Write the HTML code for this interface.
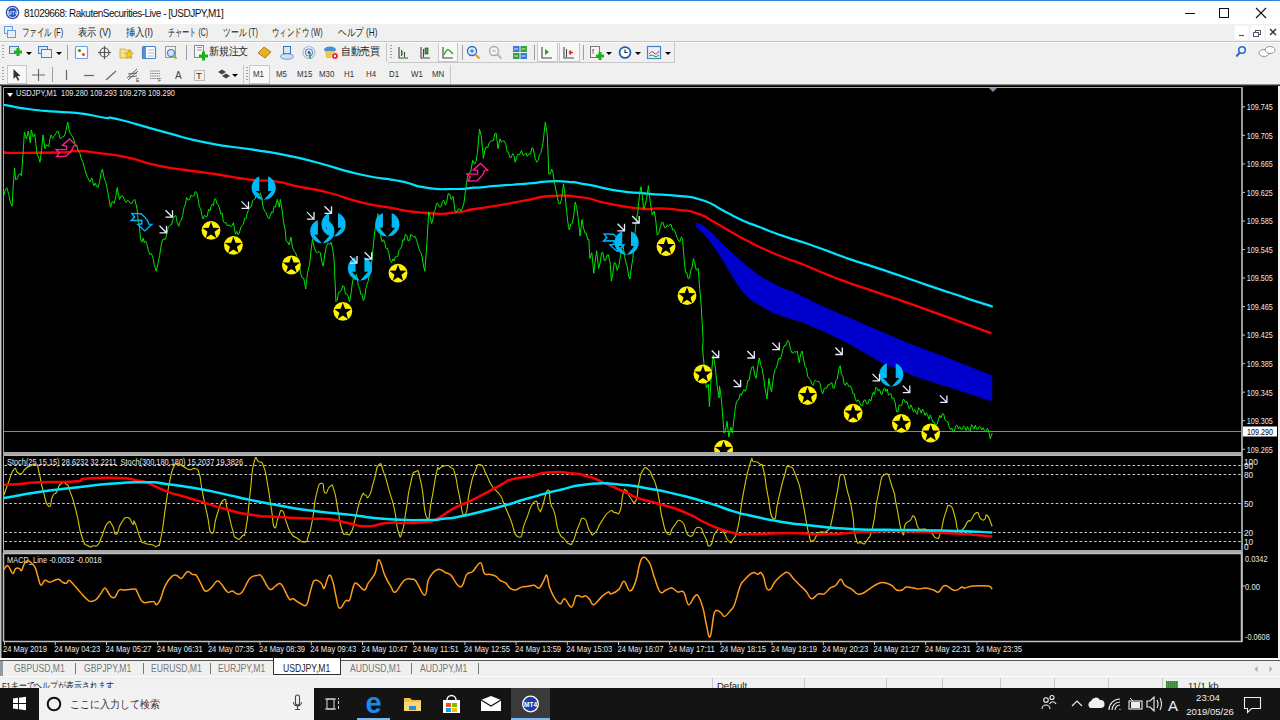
<!DOCTYPE html>
<html><head><meta charset="utf-8">
<style>
*{margin:0;padding:0;box-sizing:border-box}
html,body{width:1280px;height:720px;overflow:hidden;background:#f0f0f0;font-family:"Liberation Sans",sans-serif;color:#000}
.abs{position:absolute}
#title{left:0;top:0;width:1280px;height:24px;background:#fff;border-top:1px solid #2f86d8}
#title .t{left:24px;top:6.5px;font-size:10px;letter-spacing:-0.5px;color:#111;white-space:nowrap}
#menu{left:0;top:24px;width:1280px;height:17px;background:#f0f0f0}
#menu span{position:absolute;top:2px;font-size:10.5px;color:#222;white-space:nowrap;transform-origin:left}
#tb1{left:0;top:41px;width:1280px;height:22px;background:#f0f0f0}
#tb2{left:0;top:63px;width:1280px;height:21px;background:#f0f0f0}
#tb2 span{position:absolute;top:5px;font-size:9.5px;color:#333;white-space:nowrap;transform:scaleX(0.83);transform-origin:left}
#chart{left:0;top:84px;width:1280px;height:576px;background:#f0f0f0}
#tabs{left:0;top:658px;width:1280px;height:18px;background:#f0f0f0;border-top:2px solid #fff}
#tabs .dl{position:absolute;left:0;top:0;width:1280px;height:1px;background:#555}
#tabs span.tx{position:absolute;top:2.5px;font-size:10.3px;transform:scaleX(0.837);transform-origin:left;color:#777;white-space:nowrap}
#tabs i{position:absolute;top:3px;width:1px;height:11px;background:#777}
#status{left:0;top:676px;width:1280px;height:12px;background:#f0f0f0;overflow:hidden;border-top:1px solid #fafafa}
#status span{position:absolute;top:3px;font-size:9.5px;color:#222;white-space:nowrap;transform-origin:left}
#status i{position:absolute;top:1px;width:1px;height:12px;background:#c8c8c8}
#task{left:0;top:688px;width:1280px;height:32px;background:#141414}
.ax{font-size:8.3px;fill:#e8e8e8;font-family:"Liberation Sans",sans-serif}
.sep{position:absolute;width:1px;background:#a0a0a0}
.grip{position:absolute;width:2px;background:repeating-linear-gradient(#a0a0a0 0 1px,transparent 1px 3px)}
.dd{position:absolute;width:0;height:0;border-left:3px solid transparent;border-right:3px solid transparent;border-top:3px solid #000}
</style></head><body>
<div id="title" class="abs">
 <svg class="abs" style="left:5px;top:4px" width="15" height="15"><circle cx="7.5" cy="7.5" r="6.8" fill="#3050b0"/><circle cx="7.5" cy="7.5" r="5" fill="none" stroke="#e8ecff" stroke-width="1"/><text x="7.5" y="9.5" font-size="5" fill="#fff" text-anchor="middle" font-family="Liberation Sans">MT4</text></svg>
 <div class="t abs">81029668: RakutenSecurities-Live - [USDJPY,M1]</div>
 <svg class="abs" style="left:1180px;top:0" width="100" height="24">
  <line x1="5" y1="12.5" x2="15" y2="12.5" stroke="#111" stroke-width="1"/>
  <rect x="39.5" y="7.5" width="9" height="9" fill="none" stroke="#111" stroke-width="1"/>
  <line x1="76" y1="7" x2="86" y2="17" stroke="#111" stroke-width="1.1"/><line x1="86" y1="7" x2="76" y2="17" stroke="#111" stroke-width="1.1"/>
 </svg>
</div>
<div id="menu" class="abs">
 <svg class="abs" style="left:4px;top:2px" width="12" height="12"><rect x="0.5" y="0.5" width="8" height="7" fill="#e4eefc" stroke="#6a9ae0"/><rect x="3.5" y="4.5" width="8" height="7" fill="#e4eefc" stroke="#6a9ae0"/></svg>
 <span style="left:22px;transform:scaleX(0.68)">ファイル (F)</span>
 <span style="left:78px;transform:scaleX(0.85)">表示 (V)</span>
 <span style="left:126px;transform:scaleX(0.845)">挿入(I)</span>
 <span style="left:168px;transform:scaleX(0.65)">チャート (C)</span>
 <span style="left:223px;transform:scaleX(0.71)">ツール (T)</span>
 <span style="left:272px;transform:scaleX(0.675)">ウィンドウ (W)</span>
 <span style="left:338px;transform:scaleX(0.78)">ヘルプ (H)</span>
 <svg class="abs" style="left:1234px;top:0" width="46" height="17">
  <rect x="0.5" y="1.5" width="14" height="14" fill="#fff"/><rect x="16.5" y="1.5" width="14" height="14" fill="#fff"/><rect x="32" y="1.5" width="14" height="14" fill="#fff"/>
  <line x1="5" y1="11.5" x2="10" y2="11.5" stroke="#556" stroke-width="1.2"/>
  <rect x="21.5" y="6.5" width="5" height="4" fill="none" stroke="#556"/><rect x="19.5" y="8.5" width="5" height="4" fill="#fff" stroke="#556"/>
  <path d="M36,5 L42,11 M42,5 L36,11" stroke="#334" stroke-width="1.5"/>
 </svg>
</div>
<div id="tb1" class="abs">
 <div class="grip" style="left:2px;top:4px;height:15px"></div>
 <svg class="abs" style="left:0;top:0" width="700" height="22">
  <!-- new chart -->
  <rect x="9.5" y="5.5" width="9" height="7" fill="#dbe8f8" stroke="#4a80c8"/><path d="M14,11 h8 M18,7 v8" stroke="#1cb01c" stroke-width="3"/>
  <!-- profiles -->
  <rect x="38.5" y="5.5" width="9" height="7" fill="#dbe8f8" stroke="#4a80c8"/><rect x="41.5" y="8.5" width="10" height="8" fill="#e8f0fa" stroke="#4a80c8"/>
  <!-- market watch -->
  <rect x="75.5" y="5.5" width="12" height="12" rx="1" fill="#fff" stroke="#6aa0e0" stroke-width="1.2"/><circle cx="79.5" cy="9.5" r="1.6" fill="#20a020"/><circle cx="83.5" cy="13.5" r="1.6" fill="#e05030"/>
  <!-- navigator crosshair -->
  <circle cx="104.5" cy="11.5" r="4.5" fill="none" stroke="#555" stroke-width="1.2"/><path d="M104.5,5 v13 M98,11.5 h13" stroke="#555" stroke-width="1.2"/>
  <!-- folder star -->
  <path d="M120,8 h5 l1,1 h5 v8 h-11z" fill="#f5e08a" stroke="#c8a840" stroke-width="0.8"/><path d="M129,9 l1.3,3 3,.2 -2.3,2 .8,3 -2.8,-1.7 -2.8,1.7 .8,-3 -2.3,-2 3,-.2z" fill="#f5d020" stroke="#b09010" stroke-width="0.6"/>
  <!-- terminal -->
  <rect x="142.5" y="5.5" width="13" height="12" rx="1" fill="#fff" stroke="#4a80c8" stroke-width="1.2"/><rect x="143" y="6" width="3" height="11" fill="#5a90d8"/><path d="M148,9 h6 M148,12 h6 M148,15 h6" stroke="#a0b8d8"/>
  <!-- tester -->
  <rect x="165.5" y="5.5" width="10" height="11" fill="#f4f4f4" stroke="#999"/><circle cx="171" cy="12" r="3.5" fill="#cde4f8" stroke="#4a80c8" stroke-width="1.2"/><path d="M173.5,14.5 l3,3" stroke="#d0a000" stroke-width="2"/>
  <!-- new order -->
  <rect x="194.5" y="4.5" width="9" height="12" fill="#f8f8f8" stroke="#888"/><path d="M197,6.5 h5 M197,9 h5" stroke="#999"/><path d="M199,15 h9 M203.5,10.5 v9" stroke="#1cb01c" stroke-width="3"/>
  <!-- history/diamond -->
  <path d="M258,12 l6,-6 l7,5 l-6,6z" fill="#e8b020" stroke="#a07010" stroke-width="0.8"/>
  <!-- cloud -->
  <rect x="283.5" y="5.5" width="7" height="7" fill="#d8e8fa" stroke="#3a70c0"/><ellipse cx="287" cy="15.5" rx="6.5" ry="2.8" fill="#cfe0f4" stroke="#4a80c8" stroke-width="0.8"/>
  <!-- signals -->
  <circle cx="309" cy="11.5" r="6" fill="none" stroke="#a8c0e0" stroke-width="1.2"/><circle cx="309" cy="11.5" r="3.5" fill="none" stroke="#5a90d0" stroke-width="1.2"/><circle cx="309" cy="11.5" r="1.4" fill="#2060c0"/><path d="M310,12 v6" stroke="#30a030" stroke-width="1.5"/>
  <!-- auto trading -->
  <ellipse cx="330" cy="8.5" rx="6" ry="3" fill="#4a90d0"/><path d="M325,10 h10 l-1,7 h-8z" fill="#f0c840"/><circle cx="335" cy="15" r="3.4" fill="#e02020" stroke="#fff" stroke-width="0.8"/><circle cx="335" cy="15" r="1.2" fill="#fff"/>
  <!-- chart types -->
  <path d="M399,6 v11 h9 M401.5,9 v6 M404.5,11 v5" stroke="#444" stroke-width="1.1" fill="none"/><path d="M402,10 v4" stroke="#20a020" stroke-width="1.5"/>
  <path d="M421,6 v11 h9 M423.5,8 v8" stroke="#444" stroke-width="1.1" fill="none"/><rect x="425" y="7" width="3" height="6" fill="#30b030" stroke="#333" stroke-width="0.6"/>
  <rect x="438.5" y="1.5" width="19" height="19" fill="#f8f8f8" stroke="#c8c8c8"/>
  <path d="M443,6 v11 h10" stroke="#444" stroke-width="1.1" fill="none"/><path d="M444,14 q3,-7 5,-5 t4,4" stroke="#20a020" stroke-width="1.2" fill="none"/>
  <!-- zoom -->
  <circle cx="472" cy="10" r="4.5" fill="#dceafa" stroke="#2a6ac8" stroke-width="1.3"/><path d="M470,10 h4 M472,8 v4" stroke="#2a6ac8"/><path d="M475.5,13.5 l4,4" stroke="#d0a020" stroke-width="2"/>
  <circle cx="494" cy="10" r="4.5" fill="#f4f4f4" stroke="#a8a8a8" stroke-width="1.3"/><path d="M492,10 h4" stroke="#a8a8a8"/><path d="M497.5,13.5 l4,4" stroke="#b8b8b8" stroke-width="2"/>
  <!-- tile -->
  <rect x="513" y="5" width="6.5" height="6" fill="#3a7ad8"/><rect x="520.5" y="5" width="6.5" height="6" fill="#30a040"/><rect x="513" y="12" width="6.5" height="6" fill="#30a040"/><rect x="520.5" y="12" width="6.5" height="6" fill="#3a7ad8"/>
  <path d="M514,8 h4 M521.5,8 h4 M514,15 h4 M521.5,15 h4" stroke="#fff" stroke-width="0.8"/>
  <!-- autoscroll, shift -->
  <rect x="537.5" y="1.5" width="20" height="19" fill="#f8f8f8" stroke="#c8c8c8"/>
  <path d="M542,6 v11 h10" stroke="#444" stroke-width="1.1" fill="none"/><path d="M545,8 l4,3 l-4,3z" fill="#20a020"/>
  <rect x="559.5" y="1.5" width="20" height="19" fill="#f8f8f8" stroke="#c8c8c8"/>
  <path d="M564,6 v11 h10 M566.5,8 v8" stroke="#444" stroke-width="1.1" fill="none"/><path d="M573,11.5 l-4,0 M569,11.5 l2,-2 M569,11.5 l2,2" stroke="#d03020" stroke-width="1.3"/>
  <!-- indicators -->
  <rect x="590.5" y="5.5" width="9" height="11" fill="#f4f4f4" stroke="#777"/><text x="592" y="13" font-size="7" fill="#333" font-family="Liberation Sans">f</text><path d="M596,15 h8 M600,11 v8" stroke="#1cb01c" stroke-width="3"/>
  <!-- periods -->
  <circle cx="625" cy="11.5" r="6.3" fill="#1e5ab8"/><circle cx="625" cy="11.5" r="4.6" fill="#fff"/><path d="M625,8.5 v3 h2.5" stroke="#123" stroke-width="1.1" fill="none"/>
  <!-- templates -->
  <rect x="647.5" y="5.5" width="13" height="12" fill="#e8f0fa" stroke="#4a80c8" stroke-width="1.2"/><path d="M649,13 q3,-4 5,-1 t5,-2" stroke="#d03030" fill="none"/><path d="M649,15 q3,-2 5,0 t5,-1" stroke="#20a020" fill="none"/>
 </svg>
 <div class="dd" style="left:26px;top:11px"></div>
 <div class="dd" style="left:56px;top:11px"></div>
 <div class="sep" style="left:67px;top:4px;height:15px"></div>
 <div class="sep" style="left:186px;top:4px;height:15px"></div>
 <span class="abs" style="left:209px;top:4px;font-size:10.5px;color:#222;letter-spacing:-0.4px;transform:scaleX(0.92);transform-origin:left">新規注文</span>
 <span class="abs" style="left:341px;top:4px;font-size:10.5px;color:#222;letter-spacing:-0.4px;transform:scaleX(0.9);transform-origin:left">自動売買</span>
 <div class="sep" style="left:386px;top:2px;height:19px;background:#c8c8c8"></div>
 <div class="grip" style="left:390px;top:4px;height:15px"></div>
 <div class="sep" style="left:462px;top:4px;height:15px"></div>
 <div class="sep" style="left:534px;top:4px;height:15px"></div>
 <div class="sep" style="left:583px;top:4px;height:15px"></div>
 <div class="dd" style="left:606px;top:11px"></div>
 <div class="dd" style="left:635px;top:11px"></div>
 <div class="dd" style="left:665px;top:11px"></div>
 <svg class="abs" style="left:1232px;top:2px" width="48" height="19">
  <circle cx="10" cy="7" r="3.3" fill="none" stroke="#2a6ad0" stroke-width="1.6"/><path d="M7.8,9.5 l-3.5,4" stroke="#2a6ad0" stroke-width="2"/>
  <ellipse cx="32" cy="10" rx="5" ry="3.5" fill="#fff" stroke="#888" stroke-width="0.9"/><ellipse cx="38" cy="7" rx="5" ry="3.5" fill="#fff" stroke="#888" stroke-width="0.9"/>
 </svg>
</div>
<div class="abs" style="left:0;top:40.5px;width:1280px;height:1.2px;background:#c4c4c4"></div><div class="abs" style="left:0;top:42px;width:1280px;height:1px;background:#fafafa"></div>
<div class="abs" style="left:388px;top:61.5px;width:287px;height:1px;background:#c8c8c8"></div><div class="abs" style="left:674px;top:42px;width:1px;height:20px;background:#c8c8c8"></div>
<div id="tb2" class="abs">
 <div class="grip" style="left:2px;top:4px;height:15px"></div>
 <svg class="abs" style="left:0;top:0" width="460" height="21">
  <rect x="7.5" y="2.5" width="19" height="18" fill="#f8f8f8" stroke="#c8c8c8"/>
  <path d="M13.5,6 v10 l2.3,-2.3 l2,4 l1.5,-0.8 l-2,-3.8 h3.3z" fill="#333"/>
  <path d="M38.5,6 v12 M32,12 h13" stroke="#666" stroke-width="1.1"/>
  <path d="M66.5,7 v10" stroke="#666" stroke-width="1.2"/>
  <path d="M84,12.5 h10" stroke="#666" stroke-width="1.2"/>
  <path d="M106,17 l10,-9" stroke="#666" stroke-width="1.2"/>
  <path d="M127,15 l10,-9 M128,17 l10,-9 M128,11 l9,-1 M129,14 l8,-1" stroke="#555" stroke-width="0.9"/><text x="136" y="19" font-size="5" fill="#333" font-family="Liberation Sans">E</text>
  <path d="M150,8 h10 M150,10.5 h10 M150,13 h10 M150,15.5 h8" stroke="#666" stroke-width="0.8" stroke-dasharray="1.5,0.7"/><text x="158" y="19" font-size="5" fill="#333" font-family="Liberation Sans">F</text>
  <text x="175" y="16" font-size="10" fill="#444" font-family="Liberation Sans">A</text>
  <rect x="194.5" y="7.5" width="10" height="10" fill="none" stroke="#888" stroke-dasharray="1,1"/><text x="196" y="16" font-size="9.5" fill="#333" font-family="Liberation Sans">T</text>
  <path d="M218,9 l4,-2.5 l4,2.5 l-4,2.5z M222,13 l4,-2.5 l4,2.5 l-4,2.5z" fill="#444"/>
  <rect x="249.5" y="2.5" width="20" height="18" fill="#f8f8f8" stroke="#c8c8c8"/>
 </svg>
 <div class="dd" style="left:232px;top:11px"></div>
 <div class="sep" style="left:52px;top:4px;height:15px"></div>
 <div class="sep" style="left:243px;top:2px;height:19px;background:#c8c8c8"></div>
 <div class="grip" style="left:246px;top:4px;height:15px"></div>
 <span style="left:253px">M1</span>
 <span style="left:276px">M5</span>
 <span style="left:297px">M15</span>
 <span style="left:319px">M30</span>
 <span style="left:344px">H1</span>
 <span style="left:366px">H4</span>
 <span style="left:389px">D1</span>
 <span style="left:411px">W1</span>
 <span style="left:432px">MN</span>
 <div class="sep" style="left:450px;top:2px;height:19px;background:#c8c8c8"></div>
</div>
<div id="chart" class="abs">
 <svg class="abs" style="left:0;top:0" width="1280" height="576" viewBox="0 84 1280 576">
<rect x="0" y="84" width="1278" height="574" fill="#000"/><rect x="0" y="658" width="1280" height="2" fill="#fff"/><rect x="0" y="85" width="1.5" height="573" fill="#c8c8c8"/><rect x="0" y="84" width="1280" height="1" fill="#8c8c8c"/><rect x="0" y="85" width="1280" height="1" fill="#2a2a2a"/>
<path d="M3.5,455 V87.5 H1242 V455" fill="none" stroke="#a8a8a8" stroke-width="1"/><line x1="1242" y1="87" x2="1242" y2="642" stroke="#999" stroke-width="2"/>
<rect x="3" y="452" width="1239" height="3" fill="#a8a8a8"/>
<path d="M3.5,550 V455.5 H1241.5" fill="none" stroke="#b8b8b8" stroke-width="1"/>
<rect x="3" y="550" width="1239" height="3" fill="#a8a8a8"/>
<path d="M3.5,641.5 V553.5 H1241.5 V641.5 H3.5" fill="none" stroke="#c0c0c0" stroke-width="1.5"/>
<path d="M989,88 L997,88 L993,92 Z" fill="#8090a8"/>
<line x1="4" y1="431.5" x2="1241" y2="431.5" stroke="#778899" stroke-width="1"/>
<line x1="1242" y1="106.8" x2="1245" y2="106.8" stroke="#c0c0c0"/>
<text x="1246.7" y="110.1" class="ax" textLength="26" lengthAdjust="spacingAndGlyphs">109.745</text>
<line x1="1242" y1="135.3" x2="1245" y2="135.3" stroke="#c0c0c0"/>
<text x="1246.7" y="138.6" class="ax" textLength="26" lengthAdjust="spacingAndGlyphs">109.705</text>
<line x1="1242" y1="163.9" x2="1245" y2="163.9" stroke="#c0c0c0"/>
<text x="1246.7" y="167.2" class="ax" textLength="26" lengthAdjust="spacingAndGlyphs">109.665</text>
<line x1="1242" y1="192.4" x2="1245" y2="192.4" stroke="#c0c0c0"/>
<text x="1246.7" y="195.7" class="ax" textLength="26" lengthAdjust="spacingAndGlyphs">109.625</text>
<line x1="1242" y1="221.0" x2="1245" y2="221.0" stroke="#c0c0c0"/>
<text x="1246.7" y="224.3" class="ax" textLength="26" lengthAdjust="spacingAndGlyphs">109.585</text>
<line x1="1242" y1="249.5" x2="1245" y2="249.5" stroke="#c0c0c0"/>
<text x="1246.7" y="252.8" class="ax" textLength="26" lengthAdjust="spacingAndGlyphs">109.545</text>
<line x1="1242" y1="278.0" x2="1245" y2="278.0" stroke="#c0c0c0"/>
<text x="1246.7" y="281.3" class="ax" textLength="26" lengthAdjust="spacingAndGlyphs">109.505</text>
<line x1="1242" y1="306.6" x2="1245" y2="306.6" stroke="#c0c0c0"/>
<text x="1246.7" y="309.9" class="ax" textLength="26" lengthAdjust="spacingAndGlyphs">109.465</text>
<line x1="1242" y1="335.1" x2="1245" y2="335.1" stroke="#c0c0c0"/>
<text x="1246.7" y="338.4" class="ax" textLength="26" lengthAdjust="spacingAndGlyphs">109.425</text>
<line x1="1242" y1="363.7" x2="1245" y2="363.7" stroke="#c0c0c0"/>
<text x="1246.7" y="367.0" class="ax" textLength="26" lengthAdjust="spacingAndGlyphs">109.385</text>
<line x1="1242" y1="392.2" x2="1245" y2="392.2" stroke="#c0c0c0"/>
<text x="1246.7" y="395.5" class="ax" textLength="26" lengthAdjust="spacingAndGlyphs">109.345</text>
<line x1="1242" y1="420.7" x2="1245" y2="420.7" stroke="#c0c0c0"/>
<text x="1246.7" y="424.0" class="ax" textLength="26" lengthAdjust="spacingAndGlyphs">109.305</text>
<line x1="1242" y1="449.3" x2="1245" y2="449.3" stroke="#c0c0c0"/>
<text x="1246.7" y="452.6" class="ax" textLength="26" lengthAdjust="spacingAndGlyphs">109.265</text>
<rect x="1243" y="426.5" width="34" height="10" fill="#fff"/>
<text x="1247" y="434.8" class="ax" style="fill:#000" textLength="26" lengthAdjust="spacingAndGlyphs">109.290</text>
<line x1="4" y1="465.5" x2="1241" y2="465.5" stroke="#c8c8c8" stroke-width="1" stroke-dasharray="2.6,2.2" stroke-dashoffset="-0.5"/>
<line x1="4" y1="474.5" x2="1241" y2="474.5" stroke="#c8c8c8" stroke-width="1" stroke-dasharray="2.6,2.2" stroke-dashoffset="-0.5"/>
<line x1="4" y1="503.5" x2="1241" y2="503.5" stroke="#c8c8c8" stroke-width="1" stroke-dasharray="2.6,2.2" stroke-dashoffset="-0.5"/>
<line x1="4" y1="532.5" x2="1241" y2="532.5" stroke="#c8c8c8" stroke-width="1" stroke-dasharray="2.6,2.2" stroke-dashoffset="-0.5"/>
<line x1="4" y1="541.5" x2="1241" y2="541.5" stroke="#c8c8c8" stroke-width="1" stroke-dasharray="2.6,2.2" stroke-dashoffset="-0.5"/>
<text x="1244" y="464.5" class="ax">100</text>
<text x="1244" y="468.5" class="ax">90</text>
<text x="1244" y="478" class="ax">80</text>
<text x="1244" y="506.5" class="ax">50</text>
<text x="1244" y="535.8" class="ax">20</text>
<text x="1244" y="545" class="ax">10</text>
<text x="1244" y="549.5" class="ax">0</text>
<text x="1245" y="562" class="ax" textLength="22.6" lengthAdjust="spacingAndGlyphs">0.0342</text>
<text x="1245" y="589.5" class="ax" textLength="14.9" lengthAdjust="spacingAndGlyphs">0.00</text>
<text x="1245" y="640" class="ax" textLength="24.7" lengthAdjust="spacingAndGlyphs">-0.0608</text>
<line x1="1242" y1="586" x2="1245" y2="586" stroke="#c0c0c0"/>
<line x1="4.5" y1="641" x2="4.5" y2="645" stroke="#c0c0c0"/>
<text x="3.0" y="652.3" class="ax" textLength="44" lengthAdjust="spacingAndGlyphs">24 May 2019</text>
<line x1="55.3" y1="641" x2="55.3" y2="645" stroke="#c0c0c0"/>
<text x="54.3" y="652.3" class="ax" textLength="46" lengthAdjust="spacingAndGlyphs">24 May 04:23</text>
<line x1="106.5" y1="641" x2="106.5" y2="645" stroke="#c0c0c0"/>
<text x="105.5" y="652.3" class="ax" textLength="46" lengthAdjust="spacingAndGlyphs">24 May 05:27</text>
<line x1="157.7" y1="641" x2="157.7" y2="645" stroke="#c0c0c0"/>
<text x="156.7" y="652.3" class="ax" textLength="46" lengthAdjust="spacingAndGlyphs">24 May 06:31</text>
<line x1="208.9" y1="641" x2="208.9" y2="645" stroke="#c0c0c0"/>
<text x="207.9" y="652.3" class="ax" textLength="46" lengthAdjust="spacingAndGlyphs">24 May 07:35</text>
<line x1="260.1" y1="641" x2="260.1" y2="645" stroke="#c0c0c0"/>
<text x="259.1" y="652.3" class="ax" textLength="46" lengthAdjust="spacingAndGlyphs">24 May 08:39</text>
<line x1="311.3" y1="641" x2="311.3" y2="645" stroke="#c0c0c0"/>
<text x="310.3" y="652.3" class="ax" textLength="46" lengthAdjust="spacingAndGlyphs">24 May 09:43</text>
<line x1="362.5" y1="641" x2="362.5" y2="645" stroke="#c0c0c0"/>
<text x="361.5" y="652.3" class="ax" textLength="46" lengthAdjust="spacingAndGlyphs">24 May 10:47</text>
<line x1="413.7" y1="641" x2="413.7" y2="645" stroke="#c0c0c0"/>
<text x="412.7" y="652.3" class="ax" textLength="46" lengthAdjust="spacingAndGlyphs">24 May 11:51</text>
<line x1="464.9" y1="641" x2="464.9" y2="645" stroke="#c0c0c0"/>
<text x="463.9" y="652.3" class="ax" textLength="46" lengthAdjust="spacingAndGlyphs">24 May 12:55</text>
<line x1="516.1" y1="641" x2="516.1" y2="645" stroke="#c0c0c0"/>
<text x="515.1" y="652.3" class="ax" textLength="46" lengthAdjust="spacingAndGlyphs">24 May 13:59</text>
<line x1="567.3" y1="641" x2="567.3" y2="645" stroke="#c0c0c0"/>
<text x="566.3" y="652.3" class="ax" textLength="46" lengthAdjust="spacingAndGlyphs">24 May 15:03</text>
<line x1="618.5" y1="641" x2="618.5" y2="645" stroke="#c0c0c0"/>
<text x="617.5" y="652.3" class="ax" textLength="46" lengthAdjust="spacingAndGlyphs">24 May 16:07</text>
<line x1="669.7" y1="641" x2="669.7" y2="645" stroke="#c0c0c0"/>
<text x="668.7" y="652.3" class="ax" textLength="46" lengthAdjust="spacingAndGlyphs">24 May 17:11</text>
<line x1="720.9" y1="641" x2="720.9" y2="645" stroke="#c0c0c0"/>
<text x="719.9" y="652.3" class="ax" textLength="46" lengthAdjust="spacingAndGlyphs">24 May 18:15</text>
<line x1="772.1" y1="641" x2="772.1" y2="645" stroke="#c0c0c0"/>
<text x="771.1" y="652.3" class="ax" textLength="46" lengthAdjust="spacingAndGlyphs">24 May 19:19</text>
<line x1="823.3" y1="641" x2="823.3" y2="645" stroke="#c0c0c0"/>
<text x="822.3" y="652.3" class="ax" textLength="46" lengthAdjust="spacingAndGlyphs">24 May 20:23</text>
<line x1="874.5" y1="641" x2="874.5" y2="645" stroke="#c0c0c0"/>
<text x="873.5" y="652.3" class="ax" textLength="46" lengthAdjust="spacingAndGlyphs">24 May 21:27</text>
<line x1="925.7" y1="641" x2="925.7" y2="645" stroke="#c0c0c0"/>
<text x="924.7" y="652.3" class="ax" textLength="46" lengthAdjust="spacingAndGlyphs">24 May 22:31</text>
<line x1="976.9" y1="641" x2="976.9" y2="645" stroke="#c0c0c0"/>
<text x="975.9" y="652.3" class="ax" textLength="46" lengthAdjust="spacingAndGlyphs">24 May 23:35</text>
<path d="M7,93 L13,93 L10,97 Z" fill="#fff"/>
<text x="16" y="96.4" class="ax" style="font-size:8.3px" textLength="159" lengthAdjust="spacingAndGlyphs">USDJPY,M1&#160;&#160;109.280 109.293 109.278 109.290</text>
<text x="7" y="465" class="ax" style="font-size:8.3px" textLength="236" lengthAdjust="spacingAndGlyphs">Stoch(25,15,15) 28.6232 32.2211&#160;&#160;Stoch(300,180,180) 15.2037 19.3826</text>
<text x="7" y="563" class="ax" style="font-size:8.3px" textLength="94.6" lengthAdjust="spacingAndGlyphs">MACD_Line -0.0032 -0.0018</text>
<defs><clipPath id="cm"><rect x="4" y="88" width="1237" height="364"/></clipPath></defs><g clip-path="url(#cm)">
<polygon points="696.3,222.5 702.5,225 710,231.25 717.5,238.75 727.5,248.75 737.5,257.5 747.5,266.25 760,276.1 771.1,282.3 782.2,288 793.3,291.7 804.4,297.2 820,305 828,308.4 867.2,325.6 906.25,342.2 945.3,356.9 992.2,375.4 992.2,401.5 952.5,388.5 917.8,377.5 883,363.5 848.3,343.6 820.5,330 799.7,321.5 785.8,317.6 771.9,312.4 758,304.5 751,300 745,294.5 737.5,285 730,272.5 722.5,260 712.5,245 703.75,233.75 696.3,227.5" fill="#0000cd"/>
<path d="M3.8,104.8 C20.0,107.6 10.6,106.7 28.1,109 C45.6,111.3 39.0,110.3 56.25,111.7 C73.5,113.1 64.1,111.4 79.7,113.3 C95.3,115.2 89.7,115.3 103.1,117.5 C116.5,119.7 99.8,115.0 120,119.8 C140.2,124.6 134.6,124.2 163.75,131.9 C192.9,139.6 178.3,137.0 207.5,142.8 C236.7,148.6 225.8,145.4 251.25,149.4 C276.8,153.4 262.1,150.4 284,154.8 C305.9,159.2 291.4,155.9 316.9,162.5 C342.4,169.1 332.9,168.3 360.6,174.5 C388.3,180.7 378.3,176.7 400,181.1 C421.7,185.5 407.5,185.1 425.8,187.7 C444.1,190.3 438.7,189.0 455,189 C471.3,189.0 459.6,188.8 474.6,187.7 C489.6,186.6 481.8,187.1 500,185.7 C518.2,184.3 513.0,184.8 529.3,183.4 C545.6,182.0 535.8,181.9 548.8,181.4 C561.8,180.9 555.4,180.7 568.4,181.8 C581.4,182.9 571.6,181.8 587.9,184.7 C604.2,187.6 597.7,187.6 617.2,190.6 C636.7,193.6 626.4,191.8 646.5,193.6 C666.6,195.4 659.0,193.8 677.5,195.9 C696.0,198.0 686.3,194.9 701.9,200 C717.5,205.1 710.6,204.4 724.4,211.3 C738.2,218.2 731.3,215.4 743.2,220.65 C755.1,225.9 747.0,222.2 760,227.2 C773.0,232.2 767.4,230.4 782.2,235.6 C797.0,240.8 789.6,237.8 804.4,242.8 C819.2,247.8 811.9,245.2 826.7,250.6 C841.5,256.0 831.1,252.8 848.9,258.9 C866.7,265.0 854.4,260.3 880,268.9 C905.6,277.5 897.5,275.0 925.8,284.6 C954.1,294.2 942.5,290.2 964.8,297.6 C987.1,305.0 974.1,300.6 992.8,306.7" fill="none" stroke="#00e5ff" stroke-width="2.2" stroke-linejoin="round"/>
<path d="M3.9,151.9 C9.1,152.6 -6.5,152.7 11.7,152.9 C29.9,153.1 36.5,153.1 58.6,152.5 C80.7,151.9 65.0,150.9 78,151 C91.0,151.1 81.4,150.8 97.7,152.9 C114.0,155.0 107.6,153.3 127,157.4 C146.4,161.5 136.5,161.0 156,165.2 C175.5,169.4 165.9,167.1 185.5,170 C205.1,172.9 193.3,170.8 214.8,174 C236.3,177.2 229.8,177.1 250,179.6 C270.2,182.1 259.1,179.0 275.4,181.4 C291.7,183.8 281.3,183.0 298.8,186.7 C316.3,190.4 308.5,187.6 328,192.5 C347.5,197.4 337.8,196.4 357.4,201.3 C377.0,206.2 363.9,203.3 386.7,207.2 C409.5,211.1 403.0,211.2 425.8,213 C448.6,214.8 438.7,213.8 455,212.5 C471.3,211.2 459.6,211.4 474.6,209 C489.6,206.6 483.1,208.1 500,205.2 C516.9,202.3 507.8,203.5 525.4,200.4 C543.0,197.3 533.8,197.0 552.7,196 C571.6,195.0 563.8,195.0 582,197.4 C600.2,199.8 588.1,199.6 607.4,203.3 C626.7,207.0 622.9,206.8 640,208.5 C657.1,210.2 646.2,208.1 658.75,208.5 C671.2,208.9 665.0,208.2 677.5,209.8 C690.0,211.4 683.8,209.0 696.25,213.2 C708.8,217.4 702.5,215.7 715,222.5 C727.5,229.3 721.2,226.6 733.75,233.6 C746.2,240.6 743.8,238.9 752.5,243.4 C761.2,247.9 750.1,242.8 760,247.2 C769.9,251.6 767.4,250.8 782.2,256.7 C797.0,262.6 789.6,259.1 804.4,265 C819.2,270.9 811.9,268.5 826.7,274.4 C841.5,280.3 831.1,276.5 848.9,282.8 C866.7,289.1 854.4,284.5 880,293.3 C905.6,302.1 897.5,299.2 925.8,309.3 C954.1,319.4 942.9,315.6 964.8,323.6 C986.7,331.6 973.7,326.9 991.5,333.4" fill="none" stroke="#ff0000" stroke-width="2.3" stroke-linejoin="round"/>
<polyline points="3.9,195.5 5.3,189.8 6.8,187.7 8.8,194.5 10.4,202.4 12.1,206.2 13.3,184.3 14.6,168.1 15.6,179.8 17.1,179.2 18.6,175 20.1,173.5 21.5,175.9 22.9,156 24.4,132 26.4,138.8 28.3,131 30.3,142.7 31.2,130 33.2,136.9 34.8,133.9 37.1,154.5 38.5,157.2 40,162.3 41.5,150.5 43,134.9 44.9,148.6 46.9,144.7 48.8,146.6 50,138.6 51.2,134.9 52.5,138.4 53.7,136.9 55.7,133.9 57,131.4 58.2,131 60.2,138.8 62.5,136.9 64,136.4 65.4,133 67.8,122.2 69.3,131 71.3,134.9 72.8,136.9 74.2,140.8 75.7,146.3 77.1,146.6 78.1,150.5 79.6,152.1 81.1,158.4 83,162.3 85,170.1 86.5,174.9 87.9,177.9 89.8,181.8 91.8,177.9 93.8,185.7 95.2,183.2 96.7,186.7 98.2,187.2 99.6,181.8 101,173.2 102.5,169.1 104,177.6 105.5,181.8 107,187.5 108.4,195.5 110.4,207.2 112.3,201.3 114.3,203.3 115.8,196.3 117.2,187.7 119.5,199.4 121.2,195.9 123,196.4 125,201.3 126.3,202.2 127.6,200.1 128.9,201.3 130.4,203.6 131.8,203.3 133.3,200.5 134.8,199.4 136.7,207.2 136.7,205.9 138,218.8 139.3,226.3 140.6,239.1 141.8,242.2 143.1,238.1 144.3,242.7 145.5,241 146.9,244 148.4,250.8 149.9,254.5 151.4,253.7 152.9,257.3 154.3,264.5 156.2,271.3 158.2,262.5 159.6,255.6 161.1,245.9 162.6,239.5 164.1,239.1 165.6,239.1 167,233.2 168.4,226.7 169.9,225.4 171.4,224.8 172.9,219.5 174.4,216.1 175.8,215.6 177.2,222.3 178.7,226.4 180,221.4 181.3,220.2 182.6,215.6 184.1,207.3 185.5,203.9 186.5,197.4 188,200.1 189.5,199.4 190.9,195.2 192.4,196.4 193.9,195.7 195.3,191.6 196.8,192.6 198.2,199.4 199.4,206.9 200.6,208.3 201.9,215.3 203.1,218.9 204.6,215.1 206.1,217 207.3,216.4 208.5,209.1 209.7,211.3 210.9,207.2 212.1,204.3 213.4,205.5 214.6,198.8 215.8,199.4 217.1,204 218.4,204.9 219.7,209.1 220.9,214.1 222.1,213 223.4,221.8 224.6,222.8 226.1,222.7 227.6,226.1 229,224.7 230.5,226.7 231.9,225.7 233.4,222.8 235.4,234.2 236.7,231.3 238,234.7 239.3,233.2 240.8,227.3 242.2,225.4 243.4,224.3 244.6,218.3 245.9,219 247.1,213.7 248.6,209.4 250,207.2 251.3,206.8 252.6,200.9 253.9,199.4 255.2,198.8 256.5,193.5 257.8,192.5 259.1,195.5 260.4,192.8 261.7,197.4 263.1,206.8 264.6,211.1 266.1,212.6 267.6,217 269.1,218.7 270.5,215 271.7,211.8 272.9,212.8 274.2,206.5 275.4,207.2 277.3,199.4 279.3,207.2 280.3,199.4 282.2,211.1 283.7,222.8 285.2,230 286.1,241 287.6,241.9 289.1,244.9 291,237.1 292.4,246.9 293.9,250.8 295.4,252.4 296.9,256.6 298.2,263.8 299.5,265.8 300.8,274.2 302.2,277.7 303.7,278.1 305.7,288.9 307.6,272.3 309.6,264.5 311.1,250.3 312.5,239.1 314.5,248.8 315.9,251.7 317.4,252.7 318.9,251.7 320.3,252.7 321.8,261.6 323.2,266.4 324.7,255.3 326.2,246.9 328.1,243 329.6,244.6 331.1,242 332.6,248.7 334,258.6 335.5,291.8 335.9,301.6 337.2,300.1 338.5,292.2 339.8,291.8 341.3,290.7 342.8,285.9 344.1,286.5 345.4,293.9 346.7,293.8 348.1,296.5 349.6,301.6 351.1,292.9 352.5,282 353.8,276.6 355.1,279.4 356.4,274.2 358.4,285.9 359.6,288.2 360.9,294.5 362.1,294.5 363.3,300.6 364.6,297.9 365.9,288.3 367.2,284 368.4,280.5 369.6,268.6 370.9,267.1 372.1,258.6 373.6,242.2 375,229.3 376.4,222.5 377.9,213.7 379.4,224.5 380.9,237.1 382.2,242 383.5,239.7 384.8,243 386.1,248.6 387.4,248.1 388.7,252.7 390.1,260.2 391.6,262.5 392.8,258.9 394.1,261 395.3,256.9 396.5,256.6 397.8,256.4 399.1,250.4 400.4,248.8 401.6,246.5 402.9,239.5 404.1,240.5 405.3,234.2 406.8,235.4 408.2,241 409.5,240.5 410.8,234.3 412.1,235.2 413.6,236.9 415,236.1 416.5,239.7 418,244.9 419.4,250.2 420.9,252.7 422.2,257.1 423.5,266 424.8,271.3 426.8,244.9 428.7,211.7 430.1,216.4 431.6,223.4 432.8,220 434.1,211.3 435.3,209.4 436.5,203.3 438,203.7 439.5,207.2 440.9,207 442.4,201.3 443.9,200.3 445.3,205.2 446.8,201.6 448.2,193.5 449.7,194.1 451.2,199.4 453.1,196.4 455.1,211.1 456.6,212.2 458,209.1 459.4,209 460.9,211.1 462.4,208.1 463.9,203.3 465.8,187.7 467.8,175.9 469.2,173.1 470.7,172 472.7,160.3 474.6,164.2 476.1,161.2 477.5,152.5 479.5,129.1 481.4,136.9 483.4,158.4 484.9,150.2 486.3,146.6 487.8,147.6 489.3,142.7 490.8,140.9 492.2,140.8 493.5,140.4 494.8,133.7 496.1,133 498,148.6 500,138.8 501.4,142.2 502.9,140.8 504.4,141.2 505.9,144.7 507.2,151.9 508.5,152.2 509.8,157.4 511.2,157.5 512.7,153.5 514,155.5 515.2,162.3 517.6,154.5 519.5,154.5 521.5,150.5 523,155.3 524.4,154.5 525.8,153 527.3,156.4 529.3,153.5 530.6,154.2 531.9,147.7 533.2,148.6 535.2,158.4 536.7,162.2 538.1,160.3 539.5,154.8 541,152.5 543,142.7 545.3,122.2 547.3,134.9 548.8,174 550.3,173.9 551.8,169.1 553,172.7 554.3,181.8 556.6,193.5 558.6,203.3 560,204.1 561.5,199.4 563.5,183.8 565,194.7 566.4,209.1 567.8,222.1 569.3,230 570.8,224 572.3,223.4 573.8,214.8 575.2,202 576.7,207.6 578.1,217.6 580.1,236.1 582,219.5 583.5,228 585,233.2 586.3,233.1 587.6,239.3 588.9,239.1 589.8,258.6 591.8,252.7 593.8,273.2 595.2,261 596.7,250.8 598.6,268.4 600.1,262.8 601.6,252.7 602.9,252.3 604.2,260.6 605.5,260.5 607,255.2 608.4,254.7 610.4,264.5 611.3,281.1 612.8,273.5 614.3,262.5 615.8,264 617.2,270.3 618.7,266.5 620.1,258.6 621.5,250 623,244.9 624.5,256.3 626,262.5 627.3,267 628.6,276 629.9,279.1 631.3,268 632.8,258.6 634.2,244.1 635.7,225.4 636.7,217.6 637.7,213 639.6,193.5 641,186.7 642.3,196 643.6,209.1 645,205.6 646.5,199.4 648.4,185.7 650.4,203.3 652.3,215 654.3,211.1 655.8,220.8 657.2,235.2 658.7,233.1 660.2,227.3 661.7,222.7 663.1,222.5 664.5,227.7 666,227.3 667.3,225 668.6,226.2 669.9,224.4 671.2,224.6 672.5,230 673.8,229.3 675.3,232 676.8,237.1 678.7,241 680,241.5 681.3,236.9 682.6,239.1 684,258 685.5,272.3 686.8,272.5 688.2,278.9 689.5,278.1 690.8,270.1 692.1,267.4 693.4,258.6 694.8,263.2 696.3,270.3 698.2,268.4 699.7,288.7 701.2,305.5 703.1,340 702.5,349.1 704.5,368.6 706.4,388.1 708.4,384.2 709.4,406.7 711.3,374.5 713.3,354.9 715.2,366.6 717.2,386.2 719.1,397.9 719.5,386.2 720.8,394.4 722.1,407.7 724,433 725.5,430 727,421.3 728.9,437 730.9,427.2 732.4,433 734.8,411.6 736.2,403 737.7,399.8 738.9,399.5 740.2,393.8 741.4,395.4 742.6,392 743.9,389.6 745.2,391.3 746.5,388.1 747.8,380.3 749.1,380.4 750.4,372.5 751.8,367.2 753.3,366.6 754.8,375.4 756.2,378.4 757.7,366.7 759.2,357.9 760.7,364.4 762.1,368.6 763.5,376.6 765,388.1 767,398.9 768.9,378.4 770.2,386.6 771.5,392 773.8,374.5 775.1,369.3 776.4,368.3 777.7,362.7 779,357.9 780.3,359.4 781.6,354.9 783.1,348.6 784.6,345.2 786,345.4 787.5,340.3 789,341.7 790.4,349.1 791.9,352.8 793.4,353 794.7,351.4 796,352.5 797.3,351 799.2,362.7 800.7,354.1 802.1,351 803.6,359.7 805.1,366.6 806.4,368.2 807.7,376.5 809,378.4 810.5,379.8 811.9,384.2 813.2,385.4 814.5,380.8 815.8,380.3 817.3,381.9 818.8,381.3 820.1,383.7 821.4,390.6 822.7,394 824.2,388.4 825.6,388.1 826.8,388.2 828,384.5 829.3,385.3 830.5,383.2 831.8,382.6 833.1,388.2 834.4,388.1 835.9,380.3 837.3,379.1 838.8,368.7 840.2,365.7 841.5,374.8 842.8,375.7 844.1,384.2 845.3,385.4 846.5,382.4 847.7,384.2 849,386.7 850.3,386 851.6,388.1 852.9,393.8 854.2,393.5 855.5,399.8 856.8,401.7 858.1,399.7 859.4,401.8 860.8,405.3 862.3,405.7 863.8,400.4 865.2,399.8 866.7,403.7 868.2,403.8 869.5,399 870.8,401 872.1,395.9 873.3,392.3 874.5,394.5 875.8,387.3 877,388.1 878.3,391.1 879.6,389.2 880.9,394 882.2,394.4 883.5,389 884.8,388.1 886,391.4 887.2,388.9 888.4,395.3 889.6,394 890.9,393.7 892.3,398.7 893.6,397.9 895,402 896.5,411.6 897.8,412.2 899.1,404.8 900.4,405.7 901.7,405.6 903,399.5 904.3,399.8 905.6,403 906.9,401.3 908.2,405.7 909.5,409 910.8,404.8 912.1,407.7 913.4,411.7 914.7,409.6 916,412.5 917.3,414.3 918.6,407.6 919.9,409.6 921.2,413.2 922.5,409 923.8,411.6 925.1,415.4 926.4,412.7 927.7,415.5 929,419.3 930.3,414.8 931.6,418.4 932.9,422.2 934.2,422 935.5,425.2 937,424.1 938.5,419.4 939.8,415.4 941.1,418 942.4,413.5 943.7,414.2 945,419.6 946.3,421.3 947.8,421.7 949.2,427.2 950.5,429.8 951.8,427.9 953.1,432.1 954.4,431 955.7,426 957,425.2 958.3,429 959.6,426.7 960.9,429.1 962.2,429.6 963.5,425.9 964.8,427.2 966.1,430.6 967.5,426.5 968.8,430.1 970.1,431.1 971.4,424.6 972.7,426.2 974,429.1 975.3,425.2 976.6,429.1 977.9,429.5 979.2,426.5 980.5,427.2 981.8,430.1 983.1,427.7 984.4,430.1 985.8,431.6 987.3,428.2 988.8,431.3 990.2,438.9 992.2,433" fill="none" stroke="#00e600" stroke-width="1" stroke-linejoin="round"/>
<polygon points="56,149.4 59.3,152.8 56.5,156.5 65.9,156.2 70,152.3 72.5,148.9 73.5,145.8 76.6,145.6 69.5,139 62.4,145.4 66.6,146.1 66.6,149.6" fill="none" stroke="#ff1a8c" stroke-width="1.4" stroke-linejoin="miter"/>
<polygon points="467,173.9 470.3,177.3 467.5,181 476.9,180.7 481,176.8 483.5,173.4 484.5,170.3 487.6,170.1 480.5,163.5 473.4,169.9 477.6,170.6 477.6,174.1" fill="none" stroke="#ff1a8c" stroke-width="1.4"/>
<polygon points="131.2,220.5 134.6,217.1 131.8,213.4 141.2,213.7 145.2,217.6 147.8,221 148.8,224.1 151.8,224.3 144.8,230.9 137.7,224.5 141.8,223.8 141.8,220.3" fill="none" stroke="#00b4ff" stroke-width="1.4"/>
<polygon points="603.5,241 606.9,237.6 604.1,233.9 613.5,234.2 617.5,238.1 620.1,241.5 621.1,244.6 624.1,244.8 617.1,251.4 610,245 614.1,244.3 614.1,240.8" fill="none" stroke="#00b4ff" stroke-width="1.4"/>
<circle cx="211" cy="230.3" r="9.4" fill="#fff200"/>
<path d="M211.0,221.8 L213.2,227.7 L219.5,227.9 L214.5,231.8 L216.2,237.9 L211.0,234.4 L205.8,237.9 L207.5,231.8 L202.5,227.9 L208.8,227.7Z" fill="#000"/>
<circle cx="233.4" cy="245.3" r="9.4" fill="#fff200"/>
<path d="M233.4,236.8 L235.6,242.7 L241.9,242.9 L236.9,246.8 L238.6,252.9 L233.4,249.4 L228.2,252.9 L229.9,246.8 L224.9,242.9 L231.2,242.7Z" fill="#000"/>
<circle cx="291.4" cy="265" r="9.4" fill="#fff200"/>
<path d="M291.4,256.5 L293.6,262.4 L299.9,262.6 L294.9,266.5 L296.6,272.6 L291.4,269.1 L286.2,272.6 L287.9,266.5 L282.9,262.6 L289.2,262.4Z" fill="#000"/>
<circle cx="342.8" cy="311.3" r="9.4" fill="#fff200"/>
<path d="M342.8,302.8 L345.0,308.7 L351.3,308.9 L346.3,312.8 L348.0,318.9 L342.8,315.4 L337.6,318.9 L339.3,312.8 L334.3,308.9 L340.6,308.7Z" fill="#000"/>
<circle cx="398" cy="273.2" r="9.4" fill="#fff200"/>
<path d="M398.0,264.7 L400.2,270.6 L406.5,270.8 L401.5,274.7 L403.2,280.8 L398.0,277.3 L392.8,280.8 L394.5,274.7 L389.5,270.8 L395.8,270.6Z" fill="#000"/>
<circle cx="666" cy="246.5" r="9.4" fill="#fff200"/>
<path d="M666.0,238.0 L668.2,243.9 L674.5,244.1 L669.5,248.0 L671.2,254.1 L666.0,250.6 L660.8,254.1 L662.5,248.0 L657.5,244.1 L663.8,243.9Z" fill="#000"/>
<circle cx="687" cy="295.7" r="9.4" fill="#fff200"/>
<path d="M687.0,287.2 L689.2,293.1 L695.5,293.3 L690.5,297.2 L692.2,303.3 L687.0,299.8 L681.8,303.3 L683.5,297.2 L678.5,293.3 L684.8,293.1Z" fill="#000"/>
<circle cx="702.9" cy="374" r="9.4" fill="#fff200"/>
<path d="M702.9,365.5 L705.1,371.4 L711.4,371.6 L706.4,375.5 L708.1,381.6 L702.9,378.1 L697.7,381.6 L699.4,375.5 L694.4,371.6 L700.7,371.4Z" fill="#000"/>
<circle cx="723.6" cy="449.3" r="9.4" fill="#fff200"/>
<path d="M723.6,440.8 L725.8,446.7 L732.1,446.9 L727.1,450.8 L728.8,456.9 L723.6,453.4 L718.4,456.9 L720.1,450.8 L715.1,446.9 L721.4,446.7Z" fill="#000"/>
<circle cx="807.5" cy="395.5" r="9.4" fill="#fff200"/>
<path d="M807.5,387.0 L809.7,392.9 L816.0,393.1 L811.0,397.0 L812.7,403.1 L807.5,399.6 L802.3,403.1 L804.0,397.0 L799.0,393.1 L805.3,392.9Z" fill="#000"/>
<circle cx="853.1" cy="413.1" r="9.4" fill="#fff200"/>
<path d="M853.1,404.6 L855.3,410.5 L861.6,410.7 L856.6,414.6 L858.3,420.7 L853.1,417.2 L847.9,420.7 L849.6,414.6 L844.6,410.7 L850.9,410.5Z" fill="#000"/>
<circle cx="901.4" cy="423.4" r="9.4" fill="#fff200"/>
<path d="M901.4,414.9 L903.6,420.8 L909.9,421.0 L904.9,424.9 L906.6,431.0 L901.4,427.5 L896.2,431.0 L897.9,424.9 L892.9,421.0 L899.2,420.8Z" fill="#000"/>
<circle cx="930.7" cy="433" r="9.4" fill="#fff200"/>
<path d="M930.7,424.5 L932.9,430.4 L939.2,430.6 L934.2,434.5 L935.9,440.6 L930.7,437.1 L925.5,440.6 L927.2,434.5 L922.2,430.6 L928.5,430.4Z" fill="#000"/>
<clipPath id="cc0"><circle cx="263.7" cy="187.7" r="12.1"/></clipPath><path d="M250.60,174.60 H276.80 V200.80 H250.60 Z M259.3,174.6 H268.1 V191.1 H271.7 L263.7,200.1 L255.7,191.1 H259.3 Z" fill="#00b8f5" fill-rule="evenodd" clip-path="url(#cc0)"/>
<clipPath id="cc1"><circle cx="322.3" cy="231.25" r="12.1"/></clipPath><path d="M309.20,218.15 H335.40 V244.35 H309.20 Z M317.9,218.2 H326.7 V234.7 H330.3 L322.3,243.7 L314.3,234.7 H317.9 Z" fill="#00b8f5" fill-rule="evenodd" clip-path="url(#cc1)"/>
<clipPath id="cc2"><circle cx="333.6" cy="224.4" r="12.1"/></clipPath><path d="M320.50,211.30 H346.70 V237.50 H320.50 Z M329.2,211.3 H338.0 V227.8 H341.6 L333.6,236.8 L325.6,227.8 H329.2 Z" fill="#00b8f5" fill-rule="evenodd" clip-path="url(#cc2)"/>
<clipPath id="cc3"><circle cx="387.3" cy="224.4" r="12.1"/></clipPath><path d="M374.20,211.30 H400.40 V237.50 H374.20 Z M382.9,211.3 H391.7 V227.8 H395.3 L387.3,236.8 L379.3,227.8 H382.9 Z" fill="#00b8f5" fill-rule="evenodd" clip-path="url(#cc3)"/>
<clipPath id="cc4"><circle cx="360" cy="268.4" r="12.1"/></clipPath><path d="M346.90,255.30 H373.10 V281.50 H346.90 Z M355.6,255.3 H364.4 V271.8 H368.0 L360.0,280.8 L352.0,271.8 H355.6 Z" fill="#00b8f5" fill-rule="evenodd" clip-path="url(#cc4)"/>
<clipPath id="cc5"><circle cx="626.6" cy="242.6" r="12.1"/></clipPath><path d="M613.50,229.50 H639.70 V255.70 H613.50 Z M622.2,229.5 H631.0 V246.0 H634.6 L626.6,255.0 L618.6,246.0 H622.2 Z" fill="#00b8f5" fill-rule="evenodd" clip-path="url(#cc5)"/>
<clipPath id="cc6"><circle cx="891.3" cy="374.5" r="12.1"/></clipPath><path d="M878.20,361.40 H904.40 V387.60 H878.20 Z M886.9,361.4 H895.7 V377.9 H899.3 L891.3,386.9 L883.3,377.9 H886.9 Z" fill="#00b8f5" fill-rule="evenodd" clip-path="url(#cc6)"/>
<path d="M165.5,210.2 L172.5,217.2 M165.5,217.2 H172.5 V210.2" fill="none" stroke="#e6ecff" stroke-width="1.3"/>
<path d="M159.5,225.8 L166.5,232.8 M159.5,232.8 H166.5 V225.8" fill="none" stroke="#e6ecff" stroke-width="1.3"/>
<path d="M241.5,201.4 L248.5,208.4 M241.5,208.4 H248.5 V201.4" fill="none" stroke="#e6ecff" stroke-width="1.3"/>
<path d="M307.0,212.1 L314.0,219.1 M307.0,219.1 H314.0 V212.1" fill="none" stroke="#e6ecff" stroke-width="1.3"/>
<path d="M324.5,206.3 L331.5,213.3 M324.5,213.3 H331.5 V206.3" fill="none" stroke="#e6ecff" stroke-width="1.3"/>
<path d="M350.0,256.1 L357.0,263.1 M350.0,263.1 H357.0 V256.1" fill="none" stroke="#e6ecff" stroke-width="1.3"/>
<path d="M364.7,252.2 L371.7,259.2 M364.7,259.2 H371.7 V252.2" fill="none" stroke="#e6ecff" stroke-width="1.3"/>
<path d="M617.5,223.8 L624.5,230.8 M617.5,230.8 H624.5 V223.8" fill="none" stroke="#e6ecff" stroke-width="1.3"/>
<path d="M632.2,216.0 L639.2,223.0 M632.2,223.0 H639.2 V216.0" fill="none" stroke="#e6ecff" stroke-width="1.3"/>
<path d="M711.7,350.5 L718.7,357.5 M711.7,357.5 H718.7 V350.5" fill="none" stroke="#e6ecff" stroke-width="1.3"/>
<path d="M733.6,379.7 L740.6,386.7 M733.6,386.7 H740.6 V379.7" fill="none" stroke="#e6ecff" stroke-width="1.3"/>
<path d="M747.3,351.0 L754.3,358.0 M747.3,358.0 H754.3 V351.0" fill="none" stroke="#e6ecff" stroke-width="1.3"/>
<path d="M772.3,342.6 L779.3,349.6 M772.3,349.6 H779.3 V342.6" fill="none" stroke="#e6ecff" stroke-width="1.3"/>
<path d="M835.3,347.5 L842.3,354.5 M835.3,354.5 H842.3 V347.5" fill="none" stroke="#e6ecff" stroke-width="1.3"/>
<path d="M872.5,373.9 L879.5,380.9 M872.5,380.9 H879.5 V373.9" fill="none" stroke="#e6ecff" stroke-width="1.3"/>
<path d="M902.8,385.6 L909.8,392.6 M902.8,392.6 H909.8 V385.6" fill="none" stroke="#e6ecff" stroke-width="1.3"/>
<path d="M939.9,395.4 L946.9,402.4 M939.9,402.4 H946.9 V395.4" fill="none" stroke="#e6ecff" stroke-width="1.3"/>
</g>
<path d="M3.9,495 C6.5,487.9 4.5,492.8 7.8,484.3 C11.1,475.8 10.4,473.5 13.7,469.6 C17.0,465.7 15.0,471.3 17.6,472.6 C20.2,473.9 18.9,474.9 21.5,473.6 C24.1,472.3 22.2,471.3 25.4,468.7 C28.6,466.1 27.6,467.0 31.2,465.7 C34.8,464.4 33.5,462.5 36.1,464.8 C38.7,467.1 36.8,464.1 39.1,472.6 C41.4,481.1 39.8,479.0 43,490.2 C46.2,501.4 45.6,504.3 48.8,506.2 C52.0,508.1 50.1,500.7 52.7,496 C55.3,491.3 54.0,496.0 56.6,492.1 C59.2,488.2 57.2,486.9 60.5,484.3 C63.8,481.7 63.1,481.7 66.4,484.3 C69.7,486.9 67.0,483.0 70.3,492.1 C73.6,501.2 72.3,496.6 76.2,511.6 C80.1,526.6 78.1,525.6 82,537 C85.9,548.4 84.0,542.9 87.9,545.8 C91.8,548.7 90.5,546.1 93.8,545.8 C97.1,545.5 95.1,547.7 97.7,544.8 C100.3,541.9 98.4,544.1 101.6,537 C104.8,529.9 103.8,527.3 107.4,523.4 C111.0,519.5 109.4,521.7 112.3,525.3 C115.2,528.9 113.3,534.7 116.2,534.1 C119.1,533.5 117.2,528.9 121.1,523.4 C125.0,517.9 124.0,517.2 127.9,517.5 C131.8,517.8 130.5,522.7 132.8,524.3 C135.1,525.9 132.2,517.5 134.8,522.4 C137.4,527.3 137.4,532.2 140.6,539 C143.8,545.8 140.6,541.0 144.5,542.9 C148.4,544.8 148.1,543.8 152.3,544.8 C156.5,545.8 154.3,548.4 157.2,545.8 C160.1,543.2 158.2,551.0 161.1,537 C164.0,523.0 163.1,522.7 166,503.8 C168.9,484.9 167.3,492.8 169.9,480.4 C172.5,468.0 171.2,472.2 173.8,466.7 C176.4,461.2 174.4,463.8 177.7,463.8 C181.0,463.8 179.7,464.8 183.6,466.7 C187.5,468.6 185.6,468.9 189.5,469.6 C193.4,470.3 192.1,467.4 195.3,468.7 C198.5,470.0 196.9,466.4 199.2,473.6 C201.5,480.8 199.5,476.9 202.1,490.2 C204.7,503.5 203.7,499.3 207,513.6 C210.3,527.9 208.6,532.5 211.9,533.1 C215.2,533.7 212.9,526.6 216.8,515.5 C220.7,504.4 220.0,501.8 223.6,499.9 C227.2,498.0 224.6,499.9 227.5,509.7 C230.4,519.5 229.5,519.8 232.4,529.2 C235.3,538.6 233.0,535.7 236.3,538 C239.6,540.3 238.9,539.7 242.2,536.1 C245.5,532.5 243.5,541.3 246.1,527.3 C248.7,513.3 247.4,515.6 250,494.1 C252.6,472.6 251.0,473.6 253.9,462.8 C256.8,452.0 255.5,460.5 258.8,461.8 C262.1,463.1 260.8,459.2 263.7,466.7 C266.6,474.2 265.0,470.0 267.6,484.3 C270.2,498.6 269.2,495.4 271.5,509.7 C273.8,524.0 272.1,524.7 274.4,527.3 C276.7,529.9 275.7,523.0 278.3,517.5 C280.9,512.0 279.6,509.4 282.2,510.7 C284.8,512.0 283.2,513.9 286.1,521.4 C289.0,528.9 287.4,527.6 291,533.1 C294.6,538.6 292.3,535.1 296.9,538 C301.5,540.9 300.8,542.9 304.7,541.9 C308.6,540.9 306.0,542.6 308.6,535.1 C311.2,527.6 309.9,533.2 312.5,519.5 C315.1,505.8 313.3,506.2 316.4,494.1 C319.5,482.0 319.0,483.6 321.9,483.3 C324.8,483.0 322.5,492.1 325.2,493.1 C327.9,494.1 327.2,487.2 330.1,486.2 C333.0,485.2 331.4,482.4 334,490.2 C336.6,498.0 335.3,496.7 337.9,509.7 C340.5,522.7 338.9,521.1 341.8,529.2 C344.7,537.3 343.4,533.4 346.7,534.1 C350.0,534.8 348.7,536.7 351.6,531.2 C354.5,525.7 352.3,528.9 355.5,517.5 C358.7,506.1 358.1,504.5 361.3,497 C364.5,489.5 362.6,495.3 365.2,495 C367.8,494.7 366.2,500.9 369.1,496 C372.0,491.1 370.7,490.8 374,480.4 C377.3,470.0 375.6,467.4 378.9,464.8 C382.2,462.2 380.2,463.5 383.8,472.6 C387.4,481.7 386.0,479.7 389.6,492.1 C393.2,504.5 391.6,496.4 394.5,509.7 C397.4,523.0 395.8,524.9 398.4,532.1 C401.0,539.3 399.7,538.7 402.3,531.2 C404.9,523.7 403.6,525.0 406.2,509.7 C408.8,494.4 407.1,498.0 410.2,485.3 C413.3,472.6 412.0,472.6 415.6,471.6 C419.2,470.6 417.2,467.0 420.9,482.3 C424.6,497.6 423.2,511.6 426.8,517.5 C430.4,523.4 428.4,514.9 431.6,499.9 C434.8,484.9 433.9,483.0 436.5,472.6 C439.1,462.2 436.6,471.0 439.5,468.7 C442.4,466.4 441.4,466.0 445.3,465.7 C449.2,465.4 447.9,464.8 451.2,467.7 C454.5,470.6 452.5,465.7 455.1,474.5 C457.7,483.3 455.8,480.7 459,494.1 C462.2,507.5 461.2,515.9 464.8,514.6 C468.4,513.3 466.4,504.2 469.7,490.2 C473.0,476.2 471.0,481.1 474.6,472.6 C478.2,464.1 476.6,464.2 480.5,464.8 C484.4,465.4 482.4,467.4 486.3,474.5 C490.2,481.6 487.6,479.4 492.2,486.2 C496.8,493.0 496.1,489.1 500,495 C503.9,500.9 500.6,496.3 503.9,503.8 C507.2,511.3 504.9,506.4 509.8,517.5 C514.7,528.6 513.4,535.7 518.6,537 C523.8,538.3 520.2,533.1 525.4,521.4 C530.6,509.7 529.6,505.8 534.2,501.9 C538.8,498.0 536.5,507.8 539.1,509.7 C541.7,511.6 539.1,514.2 542,507.7 C544.9,501.2 545.0,491.5 547.9,490.2 C550.8,488.9 548.5,496.0 550.8,503.8 C553.1,511.6 552.1,504.5 554.7,513.6 C557.3,522.7 555.3,522.7 558.6,531.2 C561.9,539.7 560.9,534.8 564.5,539 C568.1,543.2 566.4,543.3 569.3,543.9 C572.2,544.5 570.3,546.4 573.2,540.9 C576.1,535.4 574.5,534.8 578.1,527.3 C581.7,519.8 580.1,517.2 584,518.5 C587.9,519.8 586.2,526.3 589.8,531.2 C593.4,536.1 590.8,536.4 594.7,533.1 C598.6,529.8 596.7,528.6 601.6,521.4 C606.5,514.2 604.9,514.5 609.4,511.6 C613.9,508.7 611.6,512.9 615.2,512.6 C618.8,512.3 617.5,516.9 620.1,510.7 C622.7,504.5 621.0,500.9 623,494.1 C625.0,487.3 623.7,489.2 626,490.2 C628.3,491.2 626.7,493.4 629.9,497 C633.1,500.6 632.8,505.1 635.7,500.9 C638.6,496.7 636.4,494.4 638.7,484.3 C641.0,474.2 639.4,475.5 642.6,470.6 C645.8,465.7 645.2,467.6 648.4,469.6 C651.6,471.6 649.7,471.0 652.3,476.5 C654.9,482.0 653.9,478.4 656.2,486.2 C658.5,494.0 657.2,489.5 659.2,499.9 C661.2,510.3 659.2,506.1 662.1,517.5 C665.0,528.9 664.1,531.2 668,534.1 C671.9,537.0 669.3,530.5 673.8,526.3 C678.3,522.1 676.4,518.1 681.6,521.4 C686.8,524.7 684.0,534.1 689.5,536.1 C695.0,538.1 693.0,527.0 698.2,527.3 C703.4,527.6 701.2,530.8 705.1,537 C709.0,543.2 706.4,547.4 710,545.8 C713.6,544.2 711.6,537.0 715.8,532.1 C720.0,527.2 718.5,528.3 722.7,531.2 C726.9,534.1 724.9,538.3 728.5,540.9 C732.1,543.5 730.1,544.2 733.4,539 C736.7,533.8 735.0,540.3 738.3,525.3 C741.6,510.3 739.3,514.6 743.2,494.1 C747.1,473.6 746.4,474.6 750,463.8 C753.6,453.0 750.6,461.8 753.9,461.8 C757.2,461.8 756.5,460.9 759.8,463.8 C763.1,466.7 761.1,460.5 763.7,470.6 C766.3,480.7 764.4,478.1 767.6,494.1 C770.8,510.1 769.8,516.6 773.4,518.5 C777.0,520.4 774.7,513.9 778.3,499.9 C781.9,485.9 780.6,487.6 784.2,476.5 C787.8,465.4 784.9,466.1 789.1,466.7 C793.3,467.3 792.4,466.7 796.9,478.4 C801.4,490.1 798.8,483.7 802.7,501.9 C806.6,520.1 805.3,520.1 808.6,533.1 C811.9,546.1 809.6,540.6 812.5,540.9 C815.4,541.2 814.8,537.0 817.4,534.1 C820.0,531.2 816.7,533.4 820.3,532.1 C823.9,530.8 824.2,534.4 828.1,530.2 C832.0,526.0 829.1,531.5 832,519.5 C834.9,507.5 833.6,509.1 836.9,494.1 C840.2,479.1 838.2,475.2 841.8,474.5 C845.4,473.8 844.1,479.1 847.7,492.1 C851.3,505.1 849.9,498.6 852.5,513.6 C855.1,528.6 852.6,527.2 855.5,537 C858.4,546.8 857.4,541.9 861.3,542.9 C865.2,543.9 863.3,545.9 867.2,540 C871.1,534.1 869.4,540.0 873,525.3 C876.6,510.6 874.0,512.9 877.9,496 C881.8,479.1 879.9,477.1 884.8,474.5 C889.7,471.9 888.7,477.8 892.6,488.2 C896.5,498.6 893.3,490.8 896.5,505.8 C899.7,520.8 899.4,526.9 902.3,533.1 C905.2,539.3 902.7,528.5 905.3,524.3 C907.9,520.1 907.3,523.0 910.2,520.4 C913.1,517.8 911.5,514.2 914.1,516.5 C916.7,518.8 915.4,523.1 918,527.3 C920.6,531.5 919.3,528.6 921.9,529.2 C924.5,529.8 922.6,527.9 925.8,529.2 C929.0,530.5 928.0,530.2 931.6,533.1 C935.2,536.0 933.6,538.0 936.5,538 C939.4,538.0 937.5,541.2 940.4,533.1 C943.3,525.0 942.0,522.7 945.3,513.6 C948.6,504.5 946.9,504.5 950.2,505.8 C953.5,507.1 952.5,509.4 955.1,517.5 C957.7,525.6 955.4,526.3 958,530.2 C960.6,534.1 959.6,532.1 962.9,529.2 C966.2,526.3 965.2,524.3 967.8,521.4 C970.4,518.5 967.8,523.3 970.7,520.4 C973.6,517.5 973.3,513.2 976.6,512.6 C979.9,512.0 977.9,516.2 980.5,518.5 C983.1,520.8 982.1,520.5 984.4,519.5 C986.7,518.5 984.7,513.2 987.3,515.5 C989.9,517.8 988.9,519.1 992.2,526.3" fill="none" stroke="#d4c800" stroke-width="1.1" stroke-linejoin="round"/>
<path d="M3.9,484.7 C14.3,484.2 7.8,484.7 19.5,483.9 C31.2,483.1 20.9,483.1 39.1,482.3 C57.3,481.5 57.9,482.7 74.2,481.4 C90.5,480.1 72.9,479.6 87.9,478.4 C102.9,477.2 102.8,477.2 119.1,477.9 C135.4,478.6 126.9,478.6 136.7,480.4 C146.5,482.2 138.6,479.7 148.4,483.3 C158.2,486.9 153.6,486.5 166,491.1 C178.4,495.7 172.5,493.1 185.5,497 C198.5,500.9 192.1,499.0 205.1,502.9 C218.1,506.8 209.6,504.8 224.6,508.7 C239.6,512.6 231.8,511.8 250,514.6 C268.2,517.4 259.8,515.8 279.3,517.1 C298.8,518.4 291.0,517.7 308.6,518.5 C326.2,519.3 319.0,518.0 332,519.5 C345.0,521.0 336.0,520.7 347.7,523 C359.4,525.3 354.2,526.3 367.2,526.3 C380.2,526.3 373.7,524.1 386.7,523 C399.7,521.9 393.2,523.3 406.2,523 C419.2,522.7 415.4,523.5 425.8,522 C436.2,520.5 427.7,523.3 437.5,518.5 C447.3,513.7 442.7,514.2 455.1,507.7 C467.5,501.2 459.6,506.4 474.6,498.9 C489.6,491.4 487.6,491.8 500,485.3 C512.4,478.8 501.9,482.3 511.7,479.4 C521.5,476.5 516.9,478.8 529.3,476.5 C541.7,474.2 535.1,473.7 548.8,472.6 C562.5,471.5 557.3,471.9 570.3,473.2 C583.3,474.5 575.5,472.8 587.9,476.5 C600.3,480.2 594.4,478.8 607.4,484.3 C620.4,489.8 615.9,488.2 627,493.1 C638.1,498.0 628.9,495.0 640.6,498.9 C652.3,502.8 647.1,500.2 662.1,504.8 C677.1,509.4 669.2,505.8 685.5,512.6 C701.8,519.4 694.6,518.5 710.9,525.3 C727.2,532.1 721.4,530.2 734.4,533.1 C747.4,536.0 731.8,534.1 750,534.1 C768.2,534.1 763.1,533.1 789.1,533.1 C815.1,533.1 802.1,534.5 828.1,534.1 C854.1,533.7 841.2,532.8 867.2,531.8 C893.2,530.8 880.2,530.8 906.2,531.2 C932.2,531.6 925.8,532.1 945.3,533.1 C964.8,534.1 949.2,532.9 964.8,534.1 C980.4,535.3 973.9,534.9 992.2,536.6" fill="none" stroke="#ff0000" stroke-width="2.5" stroke-linejoin="round"/>
<path d="M3.9,498 C27.4,494.1 14.4,495.7 39.1,492.1 C63.8,488.5 52.1,490.1 78.1,487.2 C104.1,484.3 94.4,484.9 117.2,483.3 C140.0,481.7 130.2,482.1 146.5,482.3 C162.8,482.5 149.7,481.9 166,483.9 C182.3,485.9 175.8,484.8 195.3,488.2 C214.8,491.6 206.4,490.2 224.6,494.1 C242.8,498.0 231.8,496.1 250,499.9 C268.2,503.7 259.8,501.9 279.3,505.4 C298.8,508.9 285.8,507.2 308.6,510.3 C331.4,513.4 321.7,511.7 347.7,514.6 C373.7,517.5 360.7,517.3 386.7,519.1 C412.7,520.9 406.3,520.2 425.8,520 C445.3,519.8 432.3,520.0 445.3,518.5 C458.3,517.0 446.6,519.4 464.8,515.5 C483.0,511.6 478.5,512.6 500,506.8 C521.5,501.0 509.8,503.5 529.3,498 C548.8,492.5 539.1,494.8 558.6,490.2 C578.1,485.6 568.4,486.3 587.9,484.3 C607.4,482.3 597.7,483.0 617.2,484.3 C636.7,485.6 627.0,484.9 646.5,488.2 C666.0,491.5 656.3,489.5 675.8,494.1 C695.3,498.7 685.6,496.1 705.1,501.9 C724.6,507.7 719.4,507.1 734.4,511.6 C749.4,516.1 735.0,512.2 750,515.5 C765.0,518.8 759.8,518.1 779.3,521.4 C798.8,524.7 785.8,522.8 808.6,525.3 C831.4,527.8 821.7,527.3 847.7,528.8 C873.7,530.3 860.7,529.3 886.7,529.8 C912.7,530.3 899.8,529.7 925.8,530.2 C951.8,530.7 942.7,530.4 964.8,531.2 C986.9,532.0 973.9,531.6 992.2,532.5" fill="none" stroke="#00e5ff" stroke-width="2.5" stroke-linejoin="round"/>
<path d="M3.9,569.5 C5.5,567.9 6.0,564.8 7.8,565.6 C9.6,566.4 11.1,572.8 12.7,573.4 C14.3,574.0 14.2,569.6 15.6,568.6 C17.0,567.6 18.3,568.2 19.5,568.6 C20.7,569.0 20.5,571.5 21.5,570.5 C22.5,569.5 23.2,565.7 24.4,563.7 C25.6,561.7 25.9,560.9 27.3,560.7 C28.7,560.5 29.6,561.3 31.2,562.7 C32.8,564.1 33.8,564.7 35.2,567.6 C36.6,570.5 36.9,573.8 38.1,577.3 C39.3,580.8 39.6,584.6 41,585.2 C42.4,585.8 43.1,580.9 44.9,580.3 C46.7,579.7 47.8,582.2 49.8,582.2 C51.8,582.2 52.9,580.9 54.7,580.3 C56.5,579.7 57.0,578.9 58.6,579.3 C60.2,579.7 60.9,581.4 62.5,582.2 C64.1,583.0 65.0,583.6 66.4,583.2 C67.8,582.8 67.7,579.9 69.3,580.3 C70.9,580.7 72.0,582.9 74.2,585.2 C76.4,587.5 77.2,588.9 80.1,592 C83.0,595.1 85.8,599.2 88.9,600.8 C92.0,602.4 93.4,601.2 95.7,599.8 C98.0,598.4 98.8,596.2 100.6,593.9 C102.4,591.6 103.1,588.7 104.5,588.1 C105.9,587.5 106.0,589.2 107.4,591 C108.8,592.8 109.7,595.7 111.3,596.9 C112.9,598.1 113.6,598.3 115.2,596.9 C116.8,595.5 117.1,591.4 119.1,590 C121.1,588.6 121.9,590.2 125,590 C128.1,589.8 132.5,588.9 134.8,589.1 C137.1,589.3 135.1,588.5 136.7,591 C138.3,593.5 139.9,599.6 142.6,601.8 C145.3,604.0 148.1,601.8 150.4,601.8 C152.7,601.8 153.1,601.2 154.3,601.8 C155.5,602.4 155.0,605.1 156.2,604.7 C157.4,604.3 158.4,603.5 160.2,599.8 C162.0,596.1 162.7,590.8 165,586.1 C167.3,581.4 169.5,578.5 171.9,576.4 C174.3,574.3 174.9,575.0 176.8,575.4 C178.7,575.8 179.5,579.1 181.6,578.3 C183.7,577.5 185.3,572.3 187.5,571.5 C189.7,570.7 190.6,573.6 192.4,574.4 C194.2,575.2 194.7,573.8 196.3,575.4 C197.9,577.0 198.4,579.1 200.2,582.2 C202.0,585.3 203.0,589.8 205.1,591 C207.2,592.2 208.6,590.1 210.9,588.1 C213.2,586.1 214.8,582.2 216.8,581.2 C218.8,580.2 218.6,581.0 220.7,583.2 C222.8,585.4 225.2,590.4 227.5,592 C229.8,593.6 230.4,590.6 232.4,591 C234.4,591.4 235.3,593.7 237.3,593.9 C239.3,594.1 239.7,595.1 242.2,592 C244.7,588.9 246.9,581.6 250,578.3 C253.1,575.0 255.5,575.8 257.8,575.4 C260.1,575.0 259.4,573.7 261.7,576.4 C264.0,579.1 266.8,587.2 269.5,589.1 C272.2,591.0 273.1,587.1 275.4,586.1 C277.7,585.1 278.5,581.7 281.2,584.2 C283.9,586.7 286.7,595.9 289.1,598.8 C291.5,601.7 290.7,597.8 293,598.8 C295.3,599.8 298.1,602.5 300.8,603.7 C303.5,604.9 304.7,607.2 306.6,604.7 C308.5,602.2 308.9,595.9 310.5,591 C312.1,586.1 312.3,581.9 314.5,580.3 C316.7,578.7 319.4,581.6 321.3,583.2 C323.2,584.8 322.6,589.7 324.2,588.1 C325.8,586.5 327.3,576.6 329.1,575.4 C330.9,574.2 331.6,578.1 333,582.2 C334.4,586.3 334.6,590.7 335.9,595.9 C337.2,601.1 337.5,607.2 339.5,608.2 C341.5,609.2 343.7,602.5 345.7,600.8 C347.7,599.1 348.0,602.7 349.6,599.8 C351.2,596.9 352.1,589.4 353.5,586.1 C354.9,582.8 354.2,582.4 356.4,583.2 C358.6,584.0 361.9,590.0 364.3,590 C366.7,590.0 366.1,586.5 368.2,583.2 C370.3,579.9 372.9,578.1 375,573.4 C377.1,568.7 376.9,559.4 378.9,559.8 C380.9,560.2 382.5,570.1 384.8,575.4 C387.1,580.7 388.5,582.8 390.6,586.1 C392.7,589.4 392.8,593.2 395.5,592 C398.2,590.8 401.0,582.8 404.3,580.3 C407.6,577.8 409.8,579.1 412.1,579.3 C414.4,579.5 413.5,578.0 416,581.2 C418.5,584.4 422.3,595.7 424.8,595.3 C427.3,594.9 426.2,584.5 428.7,579.3 C431.2,574.1 434.2,570.9 437.5,569.5 C440.8,568.1 442.6,571.3 445.3,572.5 C448.0,573.7 448.9,573.1 451.2,575.4 C453.5,577.7 454.9,582.1 457,584.2 C459.1,586.3 459.9,588.1 461.9,586.1 C463.9,584.1 464.6,577.3 466.8,574.4 C469.0,571.5 470.0,573.8 472.7,571.5 C475.4,569.2 478.2,562.3 480.5,562.7 C482.8,563.1 482.5,571.1 484.4,573.4 C486.3,575.7 487.9,573.8 490.2,574.4 C492.5,575.0 494.1,575.2 496.1,576.4 C498.1,577.6 498.0,578.9 500,580.3 C502.0,581.7 503.9,581.6 505.9,583.2 C507.9,584.8 507.9,586.7 509.8,588.1 C511.7,589.5 513.3,590.2 515.6,590 C517.9,589.8 518.8,587.9 521.5,587.1 C524.2,586.3 526.8,586.5 529.3,586.1 C531.8,585.7 532.2,584.8 534.2,585.2 C536.2,585.6 537.2,589.1 539.1,588.1 C541.0,587.1 542.3,582.8 543.9,580.3 C545.5,577.8 545.7,573.8 546.9,575.4 C548.1,577.0 548.0,583.2 549.8,588.1 C551.6,593.0 553.6,596.7 555.7,599.8 C557.8,602.9 558.7,603.9 560.5,603.7 C562.3,603.5 562.5,598.2 564.5,598.8 C566.5,599.4 568.6,605.4 570.3,606.6 C572.0,607.8 572.0,606.8 573.2,604.7 C574.4,602.6 574.4,597.5 576.2,595.9 C578.0,594.3 580.1,596.9 582,596.9 C583.9,596.9 584.3,595.3 585.9,595.9 C587.5,596.5 588.2,598.0 589.8,599.8 C591.4,601.6 591.4,605.3 593.8,604.7 C596.2,604.1 598.7,599.4 601.6,596.9 C604.5,594.4 606.5,592.6 608.4,592 C610.3,591.4 609.2,594.5 611.3,593.9 C613.4,593.3 616.6,591.6 619.1,589.1 C621.6,586.6 621.8,580.8 624,581.2 C626.2,581.6 627.6,591.0 629.9,591 C632.2,591.0 633.4,587.6 635.7,581.2 C638.0,574.8 638.9,562.5 641.6,558.8 C644.3,555.1 646.9,559.0 649.4,562.7 C651.9,566.4 652.1,571.4 654.3,577.3 C656.5,583.2 657.9,589.5 660.2,592 C662.5,594.5 663.7,590.8 666,590 C668.3,589.2 669.6,587.7 671.9,588.1 C674.2,588.5 675.4,591.2 677.7,592 C680.0,592.8 681.4,589.5 683.6,592 C685.8,594.5 686.4,603.7 688.5,604.7 C690.6,605.7 692.4,598.7 694.3,596.9 C696.2,595.1 696.4,593.6 698.2,595.9 C700.0,598.2 701.5,603.1 703.1,608.6 C704.7,614.1 704.7,617.5 706.1,623.2 C707.5,628.9 708.4,638.6 710,636.9 C711.6,635.2 712.5,619.8 713.9,614.5 C715.3,609.2 715.4,610.9 716.8,610.5 C718.2,610.1 719.1,611.3 720.7,612.5 C722.3,613.7 722.6,616.8 724.6,616.4 C726.6,616.0 728.5,612.8 730.5,610.5 C732.5,608.2 732.5,609.6 734.4,604.7 C736.3,599.8 738.3,591.0 740.2,586.1 C742.1,581.2 742.1,582.6 744.1,580.3 C746.1,578.0 748.0,576.0 750,574.4 C752.0,572.8 752.3,572.5 753.9,572.5 C755.5,572.5 756.4,574.4 757.8,574.4 C759.2,574.4 759.5,571.9 760.7,572.5 C761.9,573.1 762.5,574.2 763.7,577.3 C764.9,580.4 765.2,585.7 766.6,588.1 C768.0,590.5 768.7,590.5 770.5,589.1 C772.3,587.7 772.7,584.3 775.4,581.2 C778.1,578.1 781.5,575.0 784.2,573.4 C786.9,571.8 787.2,572.2 789.1,573.4 C791.0,574.6 791.6,576.8 793.9,579.3 C796.2,581.8 798.3,583.6 800.8,586.1 C803.3,588.6 804.5,589.5 806.6,592 C808.7,594.5 809.1,598.4 811.5,598.8 C813.9,599.2 815.9,594.9 818.4,593.9 C820.9,592.9 821.9,595.1 824.2,593.9 C826.5,592.7 827.8,589.8 830.1,588.1 C832.4,586.4 833.8,587.0 835.9,585.2 C838.0,583.4 839.0,579.3 840.8,579.3 C842.6,579.3 842.5,583.2 844.7,585.2 C846.9,587.2 849.1,587.4 851.6,589.1 C854.1,590.8 855.1,593.1 857.4,593.9 C859.7,594.7 861.0,594.0 863.3,593 C865.6,592.0 866.0,591.1 869.1,589.1 C872.2,587.1 875.4,584.4 878.9,583.2 C882.4,582.0 884.0,582.6 886.7,583.2 C889.4,583.8 890.6,584.7 892.6,586.1 C894.6,587.5 894.6,589.2 896.5,590 C898.4,590.8 900.4,590.6 902.3,590 C904.2,589.4 903.8,587.5 906.2,587.1 C908.6,586.7 911.7,587.7 914.1,588.1 C916.5,588.5 915.7,589.1 918,589.1 C920.3,589.1 922.7,587.9 925.8,588.1 C928.9,588.3 931.1,589.2 933.6,590 C936.1,590.8 936.5,592.8 938.5,592 C940.5,591.2 941.6,587.3 943.4,586.1 C945.2,584.9 945.4,585.3 947.3,586.1 C949.2,586.9 951.2,589.2 953.1,590 C955.0,590.8 955.2,590.6 957,590 C958.8,589.4 960.3,587.5 961.9,587.1 C963.5,586.7 962.6,588.3 964.8,588.1 C967.0,587.9 968.0,586.5 972.7,586.1 C977.4,585.7 984.4,585.5 988.3,586.1 C992.2,586.7 990.6,587.9 992.2,589.1" fill="none" stroke="#ff9a1a" stroke-width="1.5" stroke-linejoin="round"/>
 </svg>
</div>
<div id="tabs" class="abs">
 <div class="abs" style="left:0;top:1px;width:3px;height:15px;background:#999"></div>
 <div class="dl"></div><div class="abs" style="left:273px;top:-2px;width:68px;height:17px;background:#fff;border:1px solid #333;border-top:none"></div>
 <span class="tx" style="left:14px">GBPUSD,M1</span><i style="left:75px"></i>
 <span class="tx" style="left:84px">GBPJPY,M1</span><i style="left:143px"></i>
 <span class="tx" style="left:151px">EURUSD,M1</span><i style="left:210px"></i>
 <span class="tx" style="left:218px">EURJPY,M1</span>
 <span class="tx" style="left:283px;color:#222">USDJPY,M1</span>
 <span class="tx" style="left:350px">AUDUSD,M1</span><i style="left:411px"></i>
 <span class="tx" style="left:420px">AUDJPY,M1</span><i style="left:478px"></i>
 <svg class="abs" style="left:1240px;top:3px" width="40" height="12"><path d="M17.5,3 l-3,3 l3,3z M29.5,3 l3,3 l-3,3z" fill="#aaa"/></svg>
</div>
<div id="status" class="abs">
 <span style="left:2px;transform:scaleX(0.79)">F1キーでヘルプが表示されます</span>
 <i style="left:712px"></i><i style="left:804px"></i><i style="left:886px"></i><i style="left:942px"></i><i style="left:1000px"></i><i style="left:1054px"></i><i style="left:1108px"></i><i style="left:1162px"></i>
 <span style="left:717px">Default</span>
 <div class="abs" style="left:1166px;top:4px;width:12px;height:8px;background:repeating-linear-gradient(90deg,#3a8a3a 0 1px,#5a80c0 1px 2px)"></div>
 <span style="left:1188px">11/1 kb</span>
</div>
<div id="task" class="abs">
 <svg class="abs" style="left:0;top:0" width="1280" height="32">
  <rect x="0" y="0" width="39" height="32" fill="#141414"/>
  <path d="M13,10.5 l5,-0.7 v5.2 h-5z M19,9.7 l7,-1 v6.3 h-7z M13,16 h5 v5.2 l-5,-0.7z M19,16 h7 v6.3 l-7,-1z" fill="#fff"/>
  <rect x="39" y="0" width="275" height="32" fill="#f2f2f2"/>
  <circle cx="54" cy="16" r="6.3" fill="none" stroke="#111" stroke-width="2"/>
  <path d="M295.5,9 a2,2 0 0 1 4,0 v6 a2,2 0 0 1 -4,0z M293.5,14 a4,4 0 0 0 8,0 M297.5,18 v3 M295,21.5 h5" fill="none" stroke="#444" stroke-width="1.1"/>
  <path d="M327,11 h7 v10 h-7z M325,11 h11 M325,21 h11 M338.5,10 v1.5 M338.5,13 v3 M338.5,18 v3" fill="none" stroke="#ddd" stroke-width="1"/>
  <text x="373.5" y="24.5" font-size="29" font-weight="bold" fill="#1e88e8" text-anchor="middle" font-family="Liberation Sans">e</text>
  <rect x="357" y="30" width="33" height="2" fill="#7ab8f0"/>
  <path d="M404,10 h6 l2,2 h9 v11 h-17z" fill="#f0c040"/><path d="M404,14 h17 v9 h-17z" fill="#f8d878"/><rect x="409" y="18" width="7" height="4" fill="#2a8ae0"/>
  <rect x="443" y="12" width="17" height="13" fill="#fff"/><path d="M447,12 a4.5,4.5 0 0 1 9,0" fill="none" stroke="#fff" stroke-width="1.4"/>
  <rect x="446" y="15" width="5" height="4" fill="#f25022"/><rect x="452" y="15" width="5" height="4" fill="#7fba00"/><rect x="446" y="20" width="5" height="4" fill="#00a4ef"/><rect x="452" y="20" width="5" height="4" fill="#ffb900"/>
  <path d="M481,12 l10,-4 l10,4 v11 h-20z" fill="#fff"/><path d="M481,12 l10,6 l10,-6" fill="none" stroke="#141414" stroke-width="1.2"/>
  <rect x="511" y="0" width="39" height="32" fill="#3a3a3a"/>
  <circle cx="530.5" cy="16" r="8.5" fill="#fff"/><circle cx="530.5" cy="16" r="7.2" fill="#1f3fa8"/><text x="530.5" y="18.5" font-size="6.5" font-weight="bold" fill="#fff" text-anchor="middle" font-family="Liberation Sans">MT4</text>
  <rect x="511" y="30" width="39" height="2" fill="#7ab8f0"/>
  <!-- tray -->
  <g fill="none" stroke="#eee" stroke-width="1.1">
   <circle cx="1046" cy="12" r="2.3"/><path d="M1042,21 a4,4 0 0 1 8,0"/><circle cx="1052" cy="9.5" r="2"/><path d="M1049.5,16 a3.5,3.5 0 0 1 6.5,0"/>
   <path d="M1072,18 l5,-5 l5,5"/>
   <path d="M1120,22 l0,-1 M1115,22 a5,5 0 0 1 5,-5 M1112,22 a8,8 0 0 1 8,-8 M1109,22 a11,11 0 0 1 11,-11"/>
   <rect x="1129" y="13" width="13" height="8"/>
   <path d="M1147,13 h3 l4,-4 v14 l-4,-4 h-3z M1157,12 q2,4 0,8 M1160,10 q3,6 0,12"/>
  </g>
  <path d="M1090,20 a4,4 0 0 1 1,-7 a5,5 0 0 1 9,-1 a3.5,3.5 0 0 1 1,8z" fill="#eee"/>
  <path d="M1131,14 h9 v6 h-9z" fill="#eee"/><path d="M1130,10 l3,3" stroke="#eee"/>
  <text x="1173" y="23" font-size="15" fill="#eee" text-anchor="middle" font-family="Liberation Sans">A</text>
  <text x="1208" y="13" font-size="9.5" fill="#eee" text-anchor="middle" font-family="Liberation Sans">23:04</text>
  <text x="1210" y="27" font-size="9.5" fill="#eee" text-anchor="middle" font-family="Liberation Sans">2019/05/26</text>
  <path d="M1244.5,9.5 h16 v11 h-9 l-4,4 v-4 h-3z" fill="none" stroke="#eee" stroke-width="1.1"/>
 </svg>
 <span class="abs" style="left:70px;top:9px;font-size:11px;color:#333;white-space:nowrap;transform:scaleX(0.91);transform-origin:left">ここに入力して検索</span>
</div>
</body></html>
